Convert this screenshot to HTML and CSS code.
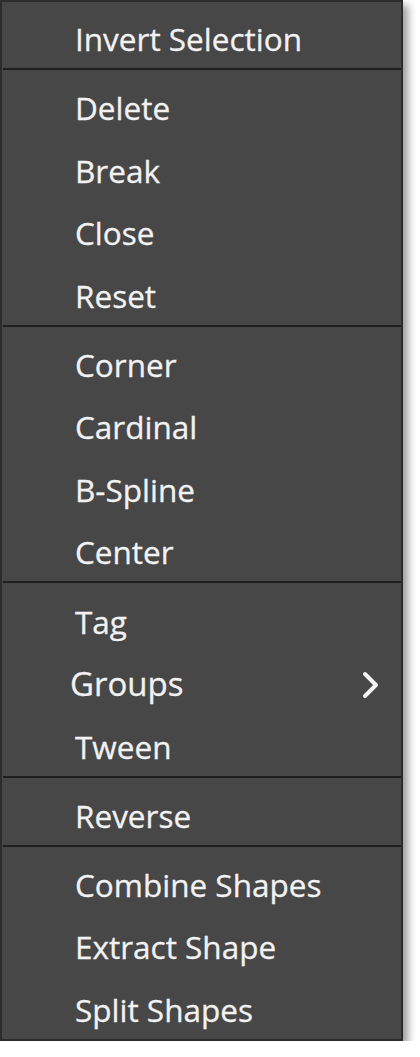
FILE: index.html
```html
<!DOCTYPE html>
<html>
<head>
<title>Shape Context Menu</title>
<link rel="stylesheet" href="styles.css">
</head>
<body>
<div class="menu">
  <div class="menu-item">Invert Selection</div>
  <div class="separator"></div>
  <div class="menu-item">Delete</div>
  <div class="menu-item">Break</div>
  <div class="menu-item">Close</div>
  <div class="menu-item">Reset</div>
  <div class="separator"></div>
  <div class="menu-item">Corner</div>
  <div class="menu-item">Cardinal</div>
  <div class="menu-item">B-Spline</div>
  <div class="menu-item">Center</div>
  <div class="separator"></div>
  <div class="menu-item">Tag</div>
  <div class="menu-item submenu">
    <span class="big-label">Groups</span>
    <svg class="chevron" width="20" height="28" viewBox="0 0 20 28">
      <polyline points="4,3 15,14 4,25" fill="none" stroke="#f4f4f4" stroke-width="4" stroke-linecap="round" stroke-linejoin="round"/>
    </svg>
  </div>
  <div class="menu-item">Tween</div>
  <div class="separator"></div>
  <div class="menu-item">Reverse</div>
  <div class="separator"></div>
  <div class="menu-item">Combine Shapes</div>
  <div class="menu-item">Extract Shape</div>
  <div class="menu-item">Split Shapes</div>
</div>
</body>
</html>
```
FILE: styles.css
```css
/* Context menu styles */
body {
  margin: 0;
  background-color: #ffffff;
  font-family: "Open Sans", "DejaVu Sans", sans-serif;
}

.menu {
  width: 399px;
  background-color: #474747;
  border: 2px solid #2c2c2c;
  padding: 1px 0 2.5px 0;
  box-shadow: 5px 5px 8px rgba(0, 0, 0, 0.4);
}

.menu-item {
  height: 62.5px;
  box-sizing: border-box;
  padding: 16px 0 0 73px;
  font-size: 31.5px;
  line-height: 40px;
  color: #f2f2f2;
  -webkit-text-stroke: 0.3px #f2f2f2;
  white-space: nowrap;
}

.submenu {
  display: flex;
  align-items: center;
  justify-content: space-between;
  padding: 10px 20px 0 68px;
}

.big-label {
  font-size: 33px;
}

.chevron {
  display: block;
  margin-top: 2px;
}

.separator {
  height: 2px;
  margin: 2.5px 0 2.2px 1px;
  background-color: #1f1f1f;
}
```
